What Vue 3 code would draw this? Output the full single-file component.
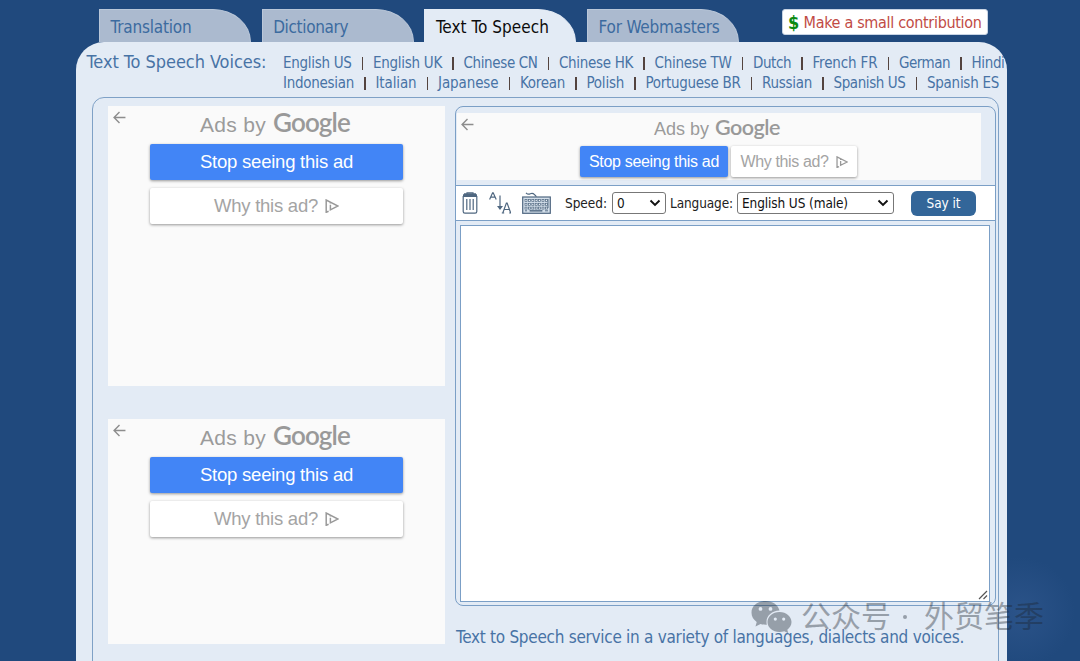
<script setup>
const tabs = [
  { label: 'Translation', w: 81 },
  { label: 'Dictionary', w: 75 },
  { label: 'Text To Speech', w: 113, active: true },
  { label: 'For Webmasters', w: 121 },
]
const voiceRows = [
  [['English US', 68.5], ['English UK', 69], ['Chinese CN', 74], ['Chinese HK', 74], ['Chinese TW', 77], ['Dutch', 38], ['French FR', 65], ['German', 51], ['Hindi', 33]],
  [['Indonesian', 71], ['Italian', 41], ['Japanese', 60.5], ['Korean', 45], ['Polish', 37.5], ['Portuguese BR', 95], ['Russian', 50], ['Spanish US', 72], ['Spanish ES', 72]],
]
// Tracks a label so that it spans the given width in pixels.
const vFit = {
  mounted(el, { value }) {
    el.style.letterSpacing = '0px'
    const natural = el.getBoundingClientRect().width
    el.style.letterSpacing = (value - natural) / el.textContent.length + 'px'
  },
}
const keys = []
for (let r = 0; r < 3; r++) for (let c = 0; c < 7; c++) keys.push({ x: 3 + c * 3.4, y: 7.5 + r * 3.8 })
</script>

<template>
  <div class="page">
    <header class="top">
      <nav class="tabs">
        <a v-for="t in tabs" :key="t.label" class="tab" :class="{ active: t.active }"><span v-fit="t.w">{{ t.label }}</span></a>
      </nav>
      <div class="donate"><b>$</b><span v-fit="178">Make a small contribution</span></div>
    </header>

    <main class="sheet">
      <div class="voices">
        <h1><span v-fit="180">Text To Speech Voices:</span></h1>
        <div class="rows">
          <div v-for="(row, i) in voiceRows" :key="i" class="row">
            <template v-for="(v, j) in row" :key="v[0]">
              <i v-if="j" class="sep"></i>
              <span v-fit="v[1]" class="voice">{{ v[0] }}</span>
            </template>
          </div>
        </div>
      </div>

      <div class="frame">
        <aside class="side">
          <section v-for="n in 2" :key="n" class="ad" :class="'ad' + n">
            <svg class="back" viewBox="0 0 12 12"><path d="M11.5 6H1M6 1L1 6l5 5" /></svg>
            <div class="by"><span v-fit="66">Ads by</span><span v-fit="77" class="goog">Google</span></div>
            <div class="btn stop"><span v-fit="153">Stop seeing this ad</span></div>
            <div class="btn why"><span v-fit="104">Why this ad?</span>
              <svg class="choice" viewBox="0 0 14 14"><path d="M3.6 12.300L1.200 13.300V1L13 7 5.400 10.800V5.800M5.400 3.400v1.200" /></svg>
            </div>
          </section>
        </aside>

        <div class="right">
          <section class="panel">
            <div class="banner">
              <svg class="back" viewBox="0 0 12 12"><path d="M11.5 6H1M6 1L1 6l5 5" /></svg>
              <div class="by"><span v-fit="55">Ads by</span><span v-fit="65" class="goog">Google</span></div>
              <div class="pair">
                <div class="btn stop"><span v-fit="130">Stop seeing this ad</span></div>
                <div class="btn why"><span v-fit="88">Why this ad?</span>
                  <svg class="choice" viewBox="0 0 14 14"><path d="M3.6 12.300L1.200 13.300V1L13 7 5.400 10.800V5.800M5.400 3.400v1.200" /></svg>
                </div>
              </div>
            </div>

            <div class="tools">
              <svg class="trash" viewBox="0 0 16 22">
                <path d="M5 2V.8h6V2" /><path class="lid" d="M1 3.2h14M2 2.2h12" />
                <path d="M1.2 4.5v15q0 1.7 1.7 1.7h10.2q1.7 0 1.7-1.7v-15z" />
                <path d="M4.8 7v11M8 7v11M11.2 7v11" />
              </svg>
              <svg class="sort" viewBox="0 0 22 22">
                <path d="M.6 7.5L3.6.8h.6l3 6.7M1.8 5.2h4.2" /><path d="M11 3.5v13" />
                <path class="fill" d="M8 14h6l-3 4z" /><path d="M13.8 21l3.6-10h.7l3.6 10M15 17.5h5.4M12.8 21h2.4M20.2 21H22" />
              </svg>
              <svg class="keyb" viewBox="0 0 29 22">
                <path d="M4 .8q2 2.2 4.3 1t4.2.8 2 2" />
                <rect class="case" x=".7" y="5" width="27.6" height="16.3" />
                <rect v-for="(k, i) in keys" :key="i" class="key" :x="k.x" :y="k.y" width="2" height="2" />
                <rect class="key" x="8" y="18.4" width="12" height=".8" />
                <path class="thin" d="M3 18.8h2M23 18.8h3M26 7v9" />
              </svg>
              <span v-fit="42" class="lbl">Speed:</span>
              <div class="select speed"><span>0</span><svg viewBox="0 0 12 8"><path d="M1.5 1.5L6 6l4.5-4.5" /></svg></div>
              <span v-fit="63" class="lbl2">Language:</span>
              <div class="select lang"><span v-fit="106">English US (male)</span><svg viewBox="0 0 12 8"><path d="M1.5 1.5L6 6l4.5-4.5" /></svg></div>
              <button class="say"><span v-fit="34">Say it</span></button>
            </div>

            <div class="area">
              <svg viewBox="0 0 10 10"><path d="M1 9l8-8M5.5 9L9 5.500" /></svg>
            </div>
          </section>
          <p class="foot"><span v-fit="508">Text to Speech service in a variety of languages, dialects and voices.</span></p>
        </div>
      </div>
    </main>

    <div class="mark">
      <svg viewBox="0 0 41 34">
        <path fill-rule="evenodd" d="M14.5 1C6.500 1 .5 6 .5 12.700c0 3.800 2 7 5.200 9.200L4.500 26.500l5-2.500q2.800.8 6.300.7C14 17 20 11 28.500 10.600 27 4.500 21.500 1 14.500 1zM9.500 7a1.900 1.900 0 1 1 0 3.800 1.900 1.900 0 0 1 0-3.800zM19.500 7a1.900 1.900 0 1 1 0 3.800 1.900 1.900 0 0 1 0-3.800z" />
        <path fill-rule="evenodd" d="M28.500 12c6.800 0 12 4.500 12 10.100 0 3-1.600 5.800-4.200 7.600l1 3.500-4-2q-2.300.8-4.800.8c-6.800 0-12-4.300-12-9.900S21.700 12 28.500 12zM24.300 17.500a1.600 1.600 0 1 0 0 3.200 1.600 1.600 0 0 0 0-3.200zM32.700 17.500a1.600 1.600 0 1 0 0 3.200 1.600 1.600 0 0 0 0-3.200z" />
      </svg>
      <span class="m1">公众号</span><span class="dot"></span><span class="m2">外贸笔季</span>
    </div>
  </div>
</template>

<style>
body { background: #20497d; overflow: hidden; }
</style>

<style scoped>
* { box-sizing: border-box; }
.page {
  position: relative; width: 1080px; height: 661px; overflow: hidden;
  background: radial-gradient(circle at 1020px 612px, #2b5389 0, #20497d 55px);
  font-family: "DejaVu Sans Condensed", "DejaVu Sans", sans-serif; font-stretch: condensed;
  color: #4873a5;
}
span { white-space: nowrap; }
.top { display: flex; height: 42px; padding: 9px 0 0 99px; }
.tabs { display: flex; gap: 10.7px; }
.tab { width: 152px; height: 33px; padding-left: 10.500px; border: 1px solid #bac7d9; border-bottom: 0; border-radius: 0 38px 0 0 / 0 33px 0 0; background: #abbacf; font-size: 17px; line-height: 35px; color: #3c6b9f; }
.tab.active { height: 36px; background: #e3ebf5; border-color: #e3ebf5; color: #0c0c0c; position: relative; }
.donate { display: flex; align-items: center; width: 206px; height: 26px; margin-left: 43px; padding: 1px 0 0 5px; background: #fff; border: 1px solid #c8d4e4; border-radius: 3px; font-size: 16px; color: #c14b45; }
.donate b { width: 15.500px; font-size: 18px; color: #0a8a12; }
.sheet { width: 931px; height: 640px; margin-left: 76px; background: #e3ebf5; border-radius: 28px 28px 0 0; padding: 1px 0 0 10.500px; }
.voices { display: flex; height: 54px; }
h1 { margin: 0; width: 196.500px; font-size: 18px; font-weight: 400; line-height: 38px; }
.rows { padding-top: 10px; }
.row { display: flex; align-items: center; height: 20px; font-size: 15px; }
.sep { width: 1.500px; height: 13px; margin: 1px 10px 0; background: #54443f; }
.frame { display: flex; width: 907px; height: 600px; margin-left: 5.500px; border: 1.500px solid #7fa1c6; border-radius: 12px 12px 0 0; padding: 8px 0 0 15px; }
.side { width: 337px; }
.ad { position: relative; padding-top: 4px; background: #fafafa; display: flex; flex-direction: column; align-items: center; }
.ad1 { height: 280px; margin-bottom: 33px; }
.ad2 { height: 225px; }
.ad, .banner { font-family: "Liberation Sans", Arial, sans-serif; color: #9b9b9b; }
svg { display: block; fill: none; flex: none; }
.back { position: absolute; left: 5px; top: 5px; width: 13px; height: 13px; stroke: #8d8d8d; stroke-width: 1.300; }
.banner .back { top: 5px; left: 4px; }
.by { display: flex; align-items: baseline; gap: 7px; height: 34px; line-height: 24px; font-size: 21px; margin-right: 3px; }
.goog { font-family: Lato, sans-serif; font-weight: 600; font-size: 26px; color: #999; }
.btn { display: flex; align-items: center; justify-content: center; border-radius: 2px; box-shadow: 0 1px 3px rgba(0,0,0,.4); }
.stop { background: #4285f6; color: #fff; }
.why { background: #fff; color: #a4a4a4; }
.ad .btn { width: 253px; height: 36px; font-size: 18.500px; flex: none; }
.ad .stop { margin-bottom: 8px; }
.choice { width: 14px; height: 14px; margin-left: 7px; stroke: #999; stroke-width: 1.500; }
.right { margin-left: 10px; }
.panel { width: 541px; height: 500px; border: 1.500px solid #7b9fc6; border-radius: 8px; padding-top: 6px; display: flex; flex-direction: column; }
.banner { position: relative; width: 524px; height: 67px; margin-left: 1px; padding-top: 3px; background: #fafafa; display: flex; flex-direction: column; align-items: center; }
.banner .by { gap: 6px; height: 30px; line-height: 22px; font-size: 18px; margin-right: 4px; }
.banner .goog { font-size: 21.500px; }
.pair { display: flex; gap: 3px; margin-right: 1px; }
.banner .btn { height: 31px; width: 148px; font-size: 16px; }
.banner .why { width: 126px; }
.banner .choice { width: 12px; height: 12px; margin-left: 7px; }
.tools { display: flex; align-items: center; height: 36px; margin-top: 5px; padding-left: 6px; background: #fff; border: solid #7b9fc6; border-width: 1.500px 0; font-size: 13.500px; color: #222; }
.trash, .sort, .keyb { stroke: #4f6780; stroke-width: 1.200; }
.trash { width: 16px; height: 22px; }
.lid { stroke-width: 1.800; }
.sort { width: 22px; height: 22px; margin-left: 11px; }
.fill { fill: #4f6780; stroke: none; }
.keyb { width: 29px; height: 22px; margin-left: 11px; }
.case { fill: #d3dee9; }
.key { fill: #eef3f8; stroke-width: .7; }
.thin { stroke-width: .9; }
.lbl { margin-left: 14px; }
.lbl2 { margin-left: 4px; }
.select { display: flex; align-items: center; justify-content: space-between; height: 22px; margin-left: 5px; padding: 0 4px; border: 1px solid #777; border-radius: 3px; color: #111; }
.select svg { width: 12px; height: 8px; stroke: #111; stroke-width: 1.900; }
.speed { width: 54px; }
.lang { width: 157px; margin-left: 4px; }
.say { width: 65px; height: 25px; margin-left: 17px; padding: 0; border: 0; border-radius: 6px; background: #336699; color: #fff; font: inherit; }
.area { position: relative; width: 530px; height: 377px; margin: 4px 0 0 4px; background: #fff; border: 1.500px solid #7b9fc6; }
.area svg { position: absolute; right: 1px; bottom: 1px; width: 10px; height: 10px; stroke: #555; stroke-width: 1.200; }
.foot { margin: 19px 0 0 1px; font-size: 17px; line-height: 24px; }
.mark { position: absolute; left: 751px; top: 600px; display: flex; height: 36px; opacity: .38; color: #1c2530; font: 400 30px/34px "Noto Sans CJK SC", sans-serif; }
.mark svg { width: 41px; height: 34px; fill: #1c2530; }
.m1, .m2 { margin-top: -3px; }
.m1 { margin-left: 9px; }
.dot { width: 4px; height: 4px; margin: 15px 17px 0 12px; border-radius: 50%; background: #1c2530; }
</style>
